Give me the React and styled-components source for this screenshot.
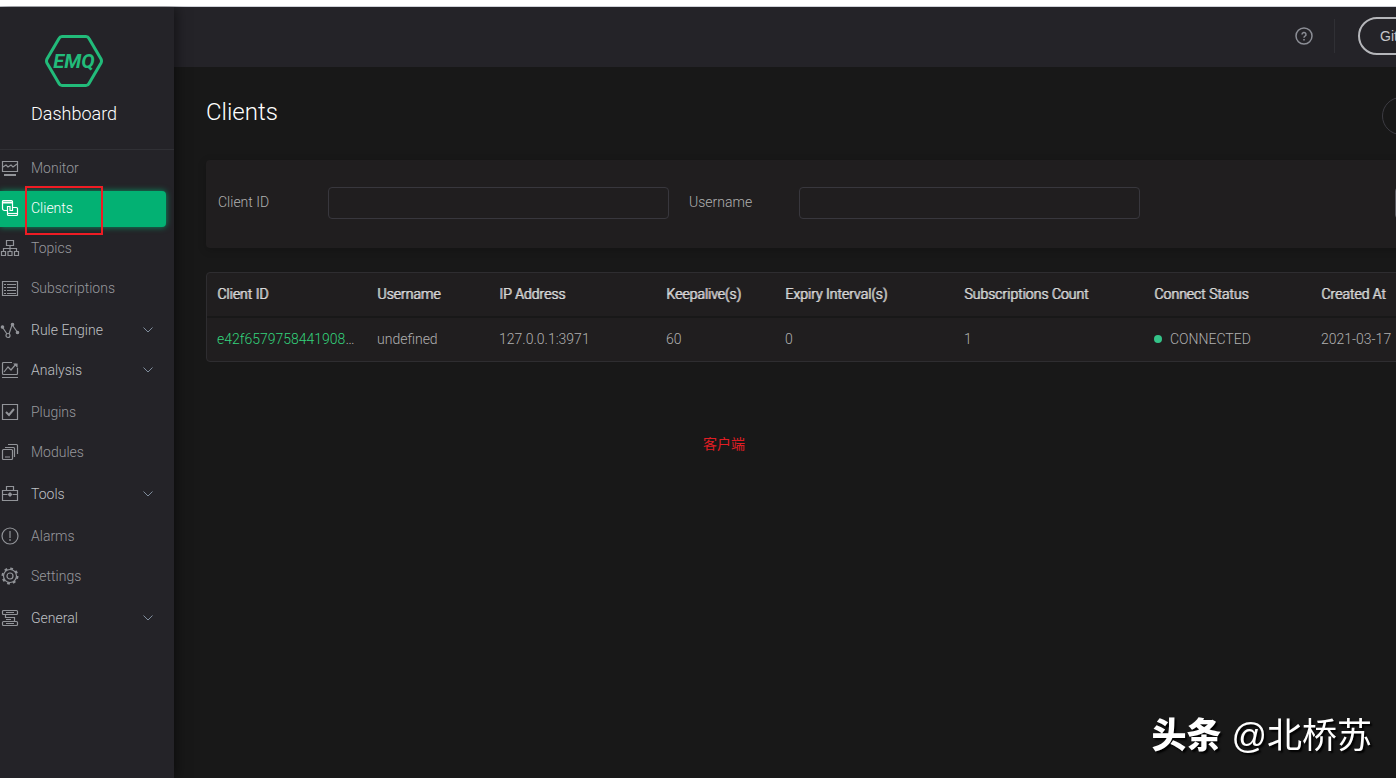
import React from "react";
import styled, { createGlobalStyle, css } from "styled-components";

const iconPaths = {
  monitor: (
    <>
      <path d="M2.5 3.5h15v10h-15z" />
      <path d="M3 9l3-2 2 2 3-2 2 2 4-3" />
      <path d="M4 17h12" strokeWidth="2" />
    </>
  ),
  clients: (
    <>
      <path d="M8 12.5H4.5a2 2 0 0 1-2-2v-7a1 1 0 0 1 1-1h8a1 1 0 0 1 1 1V8" />
      <path d="M2.5 4.5h10" strokeWidth="2" />
      <path d="M12 9.5h4.5a1 1 0 0 1 1 1v6a1 1 0 0 1-1 1h-8a1 1 0 0 1-1-1v-8H10v4h2.5V8" />
      <path d="M8 15.5h9" />
    </>
  ),
  topics: (
    <>
      <path d="M6.5 2.5h7v5h-7zM1.5 13.5h4v4h-4zM8 13.5h4v4H8zM14.5 13.5h4v4h-4z" />
      <path d="M10 7.5v6M3.5 13.5v-3h13v3" />
    </>
  ),
  subscriptions: (
    <>
      <path d="M2.5 3.5h15v14h-15z" />
      <path d="M4 6.5h2M7 6.5h9M4 9.5h2M7 9.5h9M4 12.5h2M7 12.5h9M4 15.5h2M7 15.5h9" />
    </>
  ),
  rules: (
    <>
      <path d="M3 8l4 6M9 14l3-9M13 6l5 7" />
      <circle cx="8" cy="15.5" r="2" />
      <circle cx="2.5" cy="7" r="1.2" fill="currentColor" />
      <circle cx="12.5" cy="4.5" r="1.2" fill="currentColor" />
      <circle cx="17.5" cy="12.5" r="1.2" fill="currentColor" />
    </>
  ),
  analysis: (
    <>
      <path d="M12 2.5H3.5a1 1 0 0 0-1 1v10a1 1 0 0 0 1 1h13a1 1 0 0 0 1-1V8" />
      <path d="M4 12l4-5 3 3 5-6M2 17.5h16" />
      <path d="M14.5 4H17v2.5z" fill="currentColor" />
    </>
  ),
  plugins: (
    <>
      <path d="M2.5 2.5h15v15h-15z" />
      <path d="M6 10l3 3 5-6" strokeWidth="2" />
    </>
  ),
  modules: (
    <>
      <rect x="2.5" y="7.5" width="10" height="10" rx="1" />
      <path d="M5 5.5h8.5a1 1 0 0 1 1 1V15M8 2.5h8.5a1 1 0 0 1 1 1V12M5 15h5" />
    </>
  ),
  tools: (
    <>
      <path d="M2.5 6.5h15v10h-15zM6.5 6V2.5h7V6M2.5 10.5h5M12.5 10.5h5" />
      <path d="M8 10.5h4M10 8.5v4" strokeWidth="2" />
    </>
  ),
  alarms: (
    <>
      <circle cx="10" cy="10" r="8" />
      <path d="M10 5v7M10 13v2" />
    </>
  ),
  settings: (
    <>
      <circle cx="10" cy="10" r="6.5" />
      <circle cx="10" cy="10" r="7.5" strokeWidth="2" strokeDasharray="2.8 3.09" />
      <circle cx="10" cy="10" r="3" />
    </>
  ),
  general: (
    <>
      <rect x="2.5" y="2.5" width="15" height="4" rx="1" />
      <rect x="2.5" y="13.5" width="15" height="4" rx="1" />
      <path d="M5.5 6.500v3h9v4M6 4.5h8M6 15.5h8M6 11.5h5" />
    </>
  ),
};

const menuGroups = [
  [
    { icon: "monitor", label: "Monitor" },
    { icon: "clients", label: "Clients", active: true },
    { icon: "topics", label: "Topics" },
    { icon: "subscriptions", label: "Subscriptions" },
  ],
  [
    { icon: "rules", label: "Rule Engine", submenu: true },
    { icon: "analysis", label: "Analysis", submenu: true },
  ],
  [
    { icon: "plugins", label: "Plugins" },
    { icon: "modules", label: "Modules" },
  ],
  [{ icon: "tools", label: "Tools", submenu: true }],
  [
    { icon: "alarms", label: "Alarms" },
    { icon: "settings", label: "Settings" },
  ],
  [{ icon: "general", label: "General", submenu: true }],
];

const columns = [
  { title: "Client ID", width: 160 },
  { title: "Username", width: 122 },
  { title: "IP Address", width: 167 },
  { title: "Keepalive(s)", width: 119 },
  { title: "Expiry Interval(s)", width: 179 },
  { title: "Subscriptions Count", width: 190 },
  { title: "Connect Status", width: 167 },
  { title: "Created At" },
];

const clients = [
  {
    id: "e42f65797584419085a1",
    username: "undefined",
    ip: "127.0.0.1:3971",
    keepalive: 60,
    expiry: 0,
    subscriptions: 1,
    status: "CONNECTED",
    createdAt: "2021-03-17",
  },
];

const Sidebar = () => (
  <SidebarPanel>
    <Brand>
      <Logo viewBox="0 0 58 52" role="img" aria-label="EMQ">
        <path d="M17 1.5h24q2 0 3 2l12 20.5q1 2 0 4L44 48.5q-1 2-3 2H17q-2 0-3-2L2 28q-1-2 0-4L14 3.5q1-2 3-2z" />
        <text x="29" y="33" textAnchor="middle">EMQ</text>
      </Logo>
      <BrandName>Dashboard</BrandName>
    </Brand>
    <Menu>
      {menuGroups.map((group) => (
        <MenuGroup key={group[0].label}>
          {group.map((item) => (
            <MenuItem key={item.label} href="#" $active={item.active} $submenu={item.submenu}>
              <MenuIcon viewBox="0 0 20 20" aria-hidden="true" $active={item.active}>
                {iconPaths[item.icon]}
              </MenuIcon>
              <MenuLabel>{item.label}</MenuLabel>
              {item.submenu && (
                <Chevron viewBox="0 0 12 12" aria-hidden="true">
                  <path d="M1.5 3.5L6 8l4.5-4.5" />
                </Chevron>
              )}
              {item.active && <Highlight />}
            </MenuItem>
          ))}
        </MenuGroup>
      ))}
    </Menu>
  </SidebarPanel>
);

const ClientsTable = () => (
  <Table>
    <colgroup>
      {columns.map((column) => (
        <Col key={column.title} $width={column.width} />
      ))}
    </colgroup>
    <thead>
      <tr>
        {columns.map((column) => (
          <HeadCell key={column.title}>{column.title}</HeadCell>
        ))}
      </tr>
    </thead>
    <tbody>
      {clients.map((client) => (
        <tr key={client.id}>
          <Cell>
            <ClientLink href="#">{client.id}</ClientLink>
          </Cell>
          <Cell>{client.username}</Cell>
          <Cell>{client.ip}</Cell>
          <Cell>{client.keepalive}</Cell>
          <Cell>{client.expiry}</Cell>
          <Cell>{client.subscriptions}</Cell>
          <Cell>
            <Status>{client.status}</Status>
          </Cell>
          <Cell>{client.createdAt}</Cell>
        </tr>
      ))}
    </tbody>
  </Table>
);

const App = () => {
  return (
    <Viewport>
      <GlobalStyle />
      <Page>
        <Sidebar />
        <Main>
          <TopBar>
            <HelpButton aria-label="Help">
              <svg viewBox="0 0 18 18" aria-hidden="true">
                <circle cx="9" cy="9" r="8" />
                <path d="M7 7.5a2 2 0 1 1 3 1.7q-1 .5-1 1.5M9 12v1.5" />
              </svg>
            </HelpButton>
            <Divider />
            <GithubLink href="#">Github</GithubLink>
          </TopBar>
          <Content>
            <TitleRow>
              <Title>Clients</Title>
              <RoundButton aria-label="Refresh" />
            </TitleRow>
            <FilterPanel>
              <Field>
                <FieldLabel htmlFor="client-id">Client ID</FieldLabel>
                <FieldInput id="client-id" />
              </Field>
              <Field>
                <FieldLabel htmlFor="username">Username</FieldLabel>
                <FieldInput id="username" />
              </Field>
              <SearchButton aria-label="Search" />
            </FilterPanel>
            <ClientsTable />
            <Note>客户端</Note>
          </Content>
        </Main>
      </Page>
      <Watermark>
        <strong>头条</strong>
        <span>@北桥苏</span>
      </Watermark>
    </Viewport>
  );
};

const GlobalStyle = createGlobalStyle`
  * {
    box-sizing: border-box;
  }

  body {
    margin: 0;
    background: #181818;
    color: #b0b0b0;
    font-family: Roboto, "Noto Sans CJK SC", sans-serif;
    font-size: 14px;
    font-weight: 300;
    line-height: 20px;
  }
`;

const Viewport = styled.div`
  display: flex;
  flex-direction: column;
  min-height: 100vh;
  overflow: hidden;
  border-top: 6px solid #fff;
`;

/* The console is laid out for wide screens, the right side is clipped. */
const Page = styled.div`
  flex: 1;
  display: flex;
  min-width: 1655px;
  border-top: 1px solid #cfd1d8;
`;

const SidebarPanel = styled.aside`
  position: relative;
  flex: 0 0 174px;
  background: #242328;
  box-shadow: 2px 0 12px rgba(0, 0, 0, 0.5);
`;

const Brand = styled.div`
  display: flex;
  flex-direction: column;
  align-items: center;
  gap: 15px;
  height: 143px;
  padding: 28px 26px 0 0;
  border-bottom: 1px solid #303035;
`;

const Logo = styled.svg`
  width: 58px;
  height: 52px;
  fill: none;
  stroke: #22bb7a;
  stroke-width: 3;

  text {
    fill: #22bb7a;
    stroke: none;
    font-size: 20px;
    font-style: italic;
    font-weight: 700;
  }
`;

const BrandName = styled.div`
  color: #fff;
  font-size: 18px;
  line-height: 24px;
`;

const Menu = styled.nav`
  display: flex;
  flex-direction: column;
  gap: 6px;
  padding-top: 1px;
`;

const MenuGroup = styled.div`
  display: flex;
  flex-direction: column;
  gap: 4px;
`;

const MenuItem = styled.a`
  position: relative;
  display: flex;
  align-items: center;
  height: 36px;
  margin-right: 8px;
  padding: 0 12px 2px 0;
  color: ${(props) => (props.$submenu ? "#bfc0c4" : "#97989d")};
  text-decoration: none;

  ${(props) =>
    props.$active &&
    css`
      color: #fff;
      background: #03b173;
      border-radius: 0 4px 4px 0;
      box-shadow: 0 0 6px rgba(3, 177, 115, 0.8);
    `}
`;

const MenuIcon = styled.svg`
  width: 20px;
  height: 20px;
  margin-right: 11px;
  color: ${(props) => (props.$active ? "#fff" : "#929499")};
  fill: none;
  stroke: currentColor;
  stroke-width: 1.2;
`;

const MenuLabel = styled.span`
  flex: 1;
`;

const Chevron = styled.svg`
  width: 12px;
  height: 12px;
  fill: none;
  stroke: #7f8c9c;
`;

const Highlight = styled.span`
  position: absolute;
  top: -5px;
  left: 25px;
  width: 78px;
  height: 49px;
  border: 2px solid #ee1c24;
`;

const Main = styled.main`
  flex: 1;
  min-width: 0;
`;

const TopBar = styled.header`
  display: flex;
  align-items: center;
  justify-content: flex-end;
  height: 60px;
  padding: 0 208px 2px 0;
  background: #242328;
`;

const HelpButton = styled.button`
  display: flex;
  padding: 0;
  border: 0;
  background: none;

  svg {
    width: 18px;
    height: 18px;
    fill: none;
    stroke: #8c8e96;
    stroke-width: 1.5;
  }
`;

const Divider = styled.span`
  width: 1px;
  height: 34px;
  margin: 0 23px 0 21px;
  background: #303035;
`;

const GithubLink = styled.a`
  width: 89px;
  height: 38px;
  padding-left: 20px;
  border: 2px solid #b5b6ba;
  border-radius: 19px;
  color: #c5c6ca;
  font-family: "Liberation Sans", sans-serif;
  font-weight: 400;
  line-height: 34px;
  text-decoration: none;
`;

const Content = styled.div`
  padding: 30px 32px;
`;

const TitleRow = styled.div`
  display: flex;
  align-items: flex-start;
  justify-content: space-between;
  height: 63px;
  padding-right: 203px;
`;

const Title = styled.h1`
  margin: 0;
  color: #fff;
  font-size: 24px;
  font-weight: 300;
  line-height: 30px;
`;

const RoundButton = styled.button`
  width: 38px;
  height: 38px;
  border: 1px solid #3c3b42;
  border-radius: 50%;
  background: none;
`;

const FilterPanel = styled.form`
  display: grid;
  grid-template-columns: repeat(3, 1fr);
  gap: 20px;
  height: 88px;
  padding: 27px 12px 0;
  border-radius: 4px;
  background: #201e1f;
  box-shadow: 0 2px 8px rgba(0, 0, 0, 0.2);
`;

const Field = styled.div`
  display: flex;
  height: 32px;
`;

const FieldLabel = styled.label`
  flex: 0 0 110px;
  line-height: 30px;
`;

const FieldInput = styled.input`
  flex: 1;
  min-width: 0;
  height: 32px;
  padding: 0 12px;
  border: 1px solid #38373d;
  border-radius: 4px;
  background: transparent;
  color: #fff;
  font: inherit;
`;

const SearchButton = styled.button`
  justify-self: end;
  width: 72px;
  height: 32px;
  margin-right: 144px;
  border: 1px solid #5a5a60;
  border-radius: 4px;
  background: none;
`;

const Table = styled.table`
  table-layout: fixed;
  width: 100%;
  margin-top: 24px;
  border: 1px solid #2e2d30;
  border-radius: 4px;
  border-spacing: 0;
  background: #201e1f;
`;

const Col = styled.col`
  width: ${(props) => (props.$width ? `${props.$width}px` : "auto")};
`;

const HeadCell = styled.th`
  height: 45px;
  padding: 0 10px 2px;
  border-bottom: 2px solid #181818;
  color: #dcdcdc;
  font-weight: 300;
  text-align: left;
  text-shadow: 1px 0 currentColor;
  white-space: nowrap;
`;

const Cell = styled.td`
  height: 43px;
  padding: 0 10px 2px;
  overflow: hidden;
  text-overflow: ellipsis;
  white-space: nowrap;
`;

const ClientLink = styled.a`
  color: #34d37c;
  text-decoration: none;
`;

const Status = styled.span`
  display: flex;
  align-items: center;
  gap: 8px;

  &:before {
    content: "";
    width: 8px;
    height: 8px;
    border-radius: 50%;
    background: #34c388;
  }
`;

const Note = styled.p`
  margin: 72px 0 0 497px;
  color: #e01e24;
  font-size: 14px;
  font-weight: 400;
`;

const Watermark = styled.div`
  position: fixed;
  right: 24px;
  bottom: 16px;
  display: flex;
  gap: 10px;
  color: #fff;
  font-family: "Liberation Sans", "Noto Sans CJK SC", sans-serif;
  font-size: 35px;
  font-weight: 400;
  line-height: 52px;
  text-shadow: 2px 2px 2px #000;

  strong {
    font-weight: 900;
  }
`;

export default App;
